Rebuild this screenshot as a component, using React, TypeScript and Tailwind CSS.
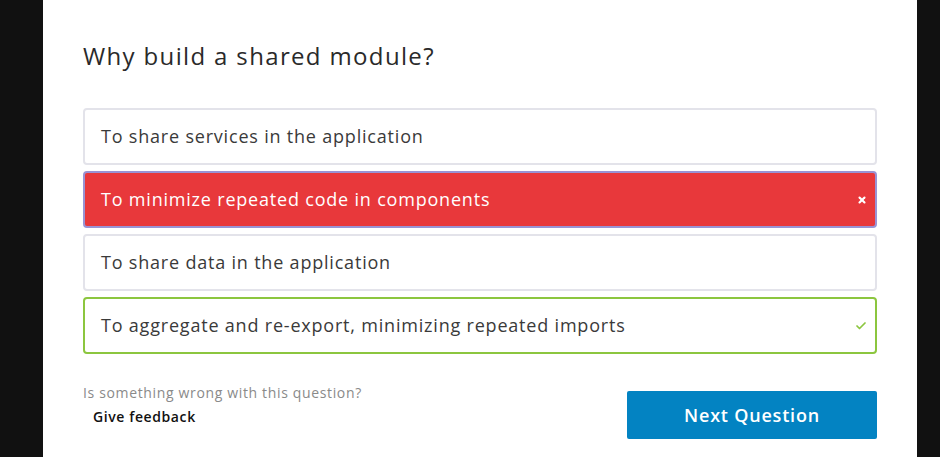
import { Check, X } from 'lucide-react';

type Option = {
  text: string;
  state: 'idle' | 'wrong' | 'right';
};

const options: Option[] = [
  { text: 'To share services in the application', state: 'idle' },
  { text: 'To minimize repeated code in components', state: 'wrong' },
  { text: 'To share data in the application', state: 'idle' },
  { text: 'To aggregate and re-export, minimizing repeated imports', state: 'right' },
];

function Answer({ text, state }: Option) {
  const tone =
    state === 'wrong'
      ? 'border-[#9a93d4] bg-[#e8383b] text-white'
      : state === 'right'
        ? 'border-[#8cc63f] bg-white text-[#3a3a3a]'
        : 'border-[#e3e3ea] bg-white text-[#3a3a3a]';

  return (
    <div className={`flex h-[57px] items-center justify-between rounded-[4px] border-2 pl-4 pr-[8px] text-[18px] tracking-[0.8px] ${tone}`}>
      <span>{text}</span>
      {state === 'wrong' && <X size={10} strokeWidth={5} className="text-white" />}
      {state === 'right' && <Check size={12} strokeWidth={3.5} className="text-[#8cc63f]" />}
    </div>
  );
}

export default function App() {
  return (
    <main className="flex h-[457px] w-full bg-[#111111] font-['Open_Sans',sans-serif]">
      <div className="ml-[43px] w-[874px] bg-white px-10 pt-[38px]">
        <h1 className="text-[24px] font-normal tracking-[1.35px] text-[#2a2a2a]">Why build a shared module?</h1>
        <div className="mt-[34px] flex flex-col gap-[6px]">
          {options.map((o) => (
            <Answer key={o.text} {...o} />
          ))}
        </div>
        <div className="mt-[28px] flex items-start justify-between">
          <div>
            <p className="text-[14px] tracking-[0.65px] text-[#8a8a8a]">Is something wrong with this question?</p>
            <button className="ml-[10px] mt-[3px] text-[14px] font-semibold tracking-[0.6px] text-[#111]">Give feedback</button>
          </div>
          <button className="mt-[9px] h-[48px] w-[250px] rounded-[2px] bg-[#0383c2] text-[18px] font-semibold tracking-[0.8px] text-white">
            Next Question
          </button>
        </div>
      </div>
    </main>
  );
}
